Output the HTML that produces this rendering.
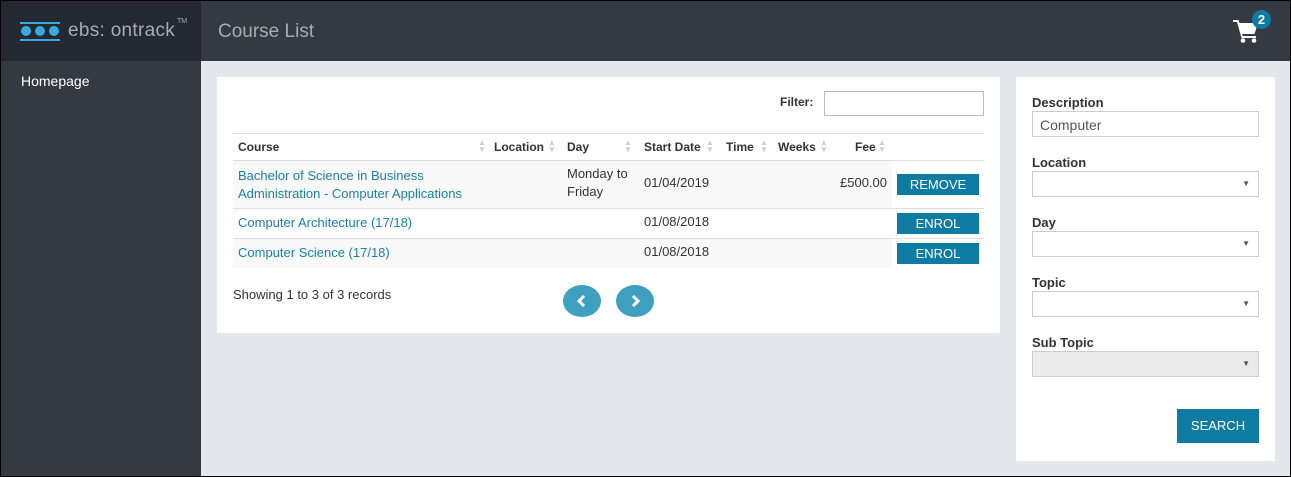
<!DOCTYPE html>
<html><head><style>
*{box-sizing:border-box;margin:0;padding:0}
body{width:1291px;height:477px;overflow:hidden;font-family:"Liberation Sans",sans-serif;font-size:13px;color:#333;background:#000}
.wrap{position:absolute;left:1px;top:1px;width:1289px;height:475px;background:#e4e8ec}
.side{position:absolute;left:0;top:0;width:200px;height:475px;background:#343a42}
.logo{position:absolute;left:0;top:0;width:200px;height:60px;background:#232832}
.hdr{position:absolute;left:200px;top:0;right:0;height:60px;background:#343a42}
.abs{position:absolute}
.card{position:absolute;background:#fff}
a{color:#1a7ea8;text-decoration:none}
.th{position:absolute;top:140px;font-weight:bold;font-size:12px;color:#333}
.arr{position:absolute;top:139px;color:#ccc;font-size:8px;line-height:7px}
.btn{position:absolute;left:897px;width:82px;height:21px;background:#0e7ba3;color:#fff;font-size:13px;text-align:center;line-height:21px}
.lbl{position:absolute;left:1032px;font-weight:bold;font-size:13px;color:#333}
.sel{position:absolute;left:1032px;width:227px;height:26px;border:1px solid #ccc;background:#fff}
.sel:after{content:"▼";position:absolute;right:8px;top:7px;font-size:8px;color:#555}
.circ{position:absolute;top:285px;width:38px;height:32px;border-radius:50%;background:#3e9fbf}
</style></head><body><div class="wrap">
<div class="side"></div>
<div class="logo">
 <div class="abs" style="left:19px;top:21px;width:40px;height:2px;background:#3aaadc"></div>
 <div class="abs" style="left:20px;top:25px;width:10px;height:10px;border-radius:50%;background:#3aaadc"></div>
 <div class="abs" style="left:34px;top:25px;width:10px;height:10px;border-radius:50%;background:#3aaadc"></div>
 <div class="abs" style="left:48px;top:25px;width:10px;height:10px;border-radius:50%;background:#3aaadc"></div>
 <div class="abs" style="left:19px;top:38px;width:40px;height:2px;background:#3aaadc"></div>
 <div class="abs" style="left:67px;top:19px;color:#a8acb2;font-size:19px;letter-spacing:0.3px">ebs: ontrack</div>
 <div class="abs" style="left:176px;top:17px;color:#a8acb2;font-size:7px">TM</div>
</div>
<div class="hdr">
 <div class="abs" style="left:17px;top:20px;color:#a8acb2;font-size:19px">Course List</div>
 <svg class="abs" style="left:1031px;top:17px" width="28" height="26" viewBox="0 0 28 26"><path d="M1 2h5.5l1 3H26l-3.5 11H10l.8 2H24v2H9.5L5 4H1z" fill="#fff"/><circle cx="11" cy="22.5" r="2.3" fill="#fff"/><circle cx="22" cy="22.5" r="2.3" fill="#fff"/></svg>
 <div class="abs" style="left:1051px;top:9px;width:19px;height:19px;border-radius:50%;background:#0e7ba3;color:#fff;font-weight:bold;font-size:13px;text-align:center;line-height:19px">2</div>
</div>
<div class="abs" style="left:20px;top:72px;color:#fff;font-size:14px">Homepage</div>
</div>
<div class="card" style="left:217px;top:77px;width:783px;height:256px"></div>
<div class="card" style="left:1016px;top:77px;width:259px;height:384px"></div>
<div class="abs" style="left:780px;top:95px;font-weight:bold;font-size:12px">Filter:</div>
<div class="abs" style="left:824px;top:91px;width:160px;height:25px;border:1px solid #bbb"></div>
<div class="abs" style="left:233px;top:133px;width:751px;height:1px;background:#ddd"></div>
<div class="abs" style="left:233px;top:160px;width:751px;height:1px;background:#ddd"></div>
<div class="abs" style="left:233px;top:161px;width:659px;height:47px;background:#f9f9f9"></div>
<div class="abs" style="left:233px;top:208px;width:751px;height:1px;background:#ddd"></div>
<div class="abs" style="left:233px;top:238px;width:751px;height:1px;background:#ddd"></div>
<div class="abs" style="left:233px;top:239px;width:659px;height:29px;background:#f9f9f9"></div>
<div class="th" style="left:238px">Course</div><div class="arr" style="left:478px">▲<br>▼</div>
<div class="th" style="left:494px">Location</div><div class="arr" style="left:548px">▲<br>▼</div>
<div class="th" style="left:567px">Day</div><div class="arr" style="left:624px">▲<br>▼</div>
<div class="th" style="left:644px">Start Date</div><div class="arr" style="left:706px">▲<br>▼</div>
<div class="th" style="left:726px">Time</div><div class="arr" style="left:760px">▲<br>▼</div>
<div class="th" style="left:778px">Weeks</div><div class="arr" style="left:820px">▲<br>▼</div>
<div class="th" style="left:855px">Fee</div><div class="arr" style="left:878px">▲<br>▼</div>
<div class="abs" style="left:238px;top:167px;line-height:18px"><a>Bachelor of Science in Business<br>Administration - Computer Applications</a></div>
<div class="abs" style="left:567px;top:165px;line-height:18px">Monday to<br>Friday</div>
<div class="abs" style="left:644px;top:175px">01/04/2019</div>
<div class="abs" style="left:840px;top:175px">£500.00</div>
<div class="btn" style="top:174px">REMOVE</div>
<div class="abs" style="left:238px;top:215px"><a>Computer Architecture (17/18)</a></div>
<div class="abs" style="left:644px;top:214px">01/08/2018</div>
<div class="btn" style="top:213px">ENROL</div>
<div class="abs" style="left:238px;top:245px"><a>Computer Science (17/18)</a></div>
<div class="abs" style="left:644px;top:244px">01/08/2018</div>
<div class="btn" style="top:243px">ENROL</div>
<div class="abs" style="left:233px;top:287px">Showing 1 to 3 of 3 records</div>
<div class="circ" style="left:563px"><svg width="38" height="32"><path d="M21 11l-5 5 5 5" stroke="#fff" stroke-width="3" fill="none"/></svg></div>
<div class="circ" style="left:616px"><svg width="38" height="32"><path d="M17 11l5 5-5 5" stroke="#fff" stroke-width="3" fill="none"/></svg></div>
<div class="lbl" style="top:95px">Description</div>
<div class="abs" style="left:1032px;top:111px;width:227px;height:26px;border:1px solid #ccc;padding:5px 7px;font-size:14px;color:#555">Computer</div>
<div class="lbl" style="top:155px">Location</div><div class="sel" style="top:171px"></div>
<div class="lbl" style="top:215px">Day</div><div class="sel" style="top:231px"></div>
<div class="lbl" style="top:275px">Topic</div><div class="sel" style="top:291px"></div>
<div class="lbl" style="top:335px">Sub Topic</div><div class="sel" style="top:351px;background:#ebebeb"></div>
<div class="abs" style="left:1177px;top:409px;width:82px;height:34px;background:#0e7ba3;color:#fff;text-align:center;line-height:34px">SEARCH</div>
</body></html>
